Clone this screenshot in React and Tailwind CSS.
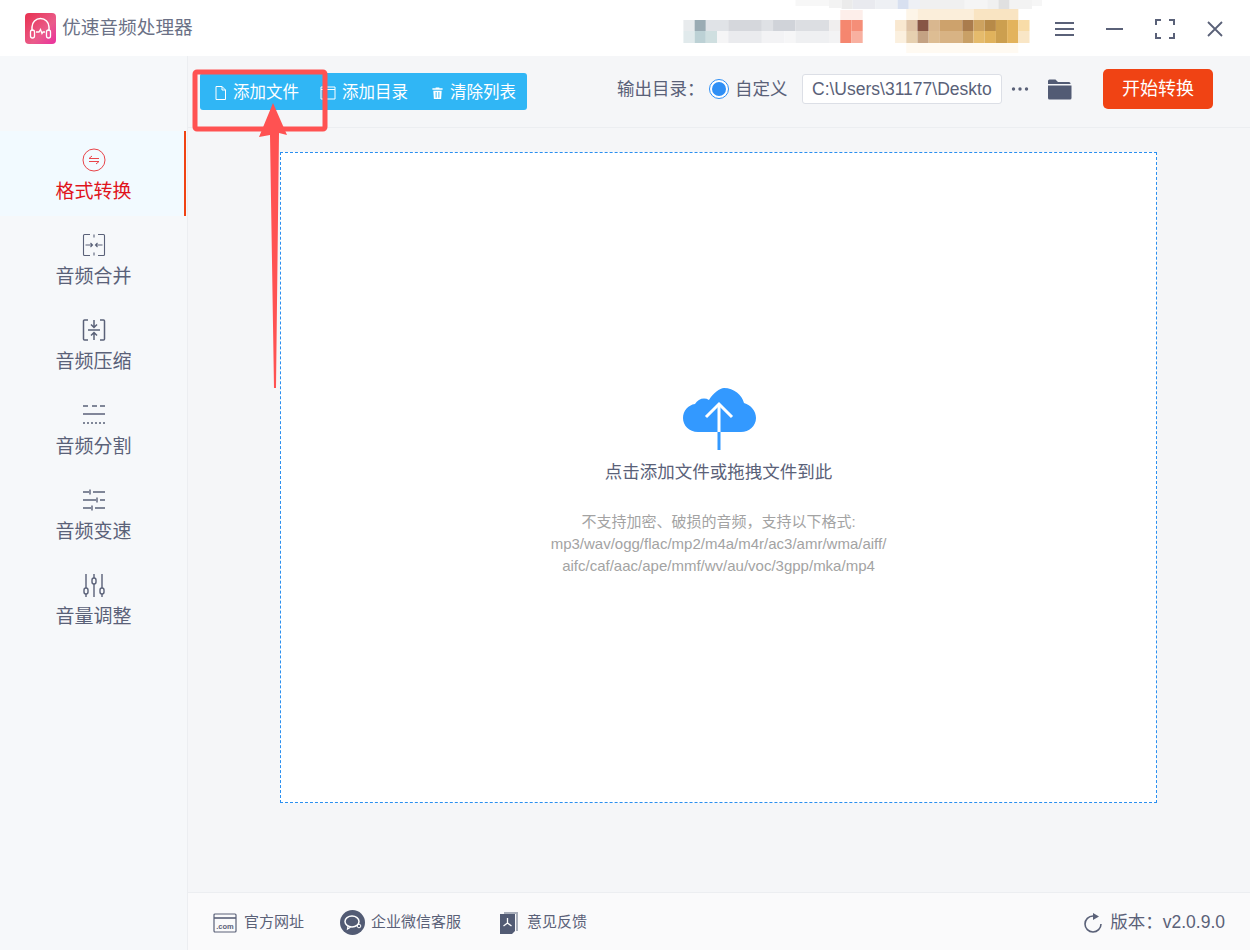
import React from "react";

const mosaic = [
  [667,20,9,11,"#e8ebed"],[676,20,9,11,"#9aabb3"],[685,20,18,11,"#e0e3e7"],[703,20,27,11,"#d5d7dc"],[730,20,9,11,"#dfe1e5"],[739,20,18,11,"#d0d3d9"],[757,20,27,11,"#dcdee2"],[784,20,9,11,"#f0eeee"],[793,20,9,11,"#f5876f"],[802,20,9,11,"#f58e78"],
  [667,31,9,12,"#e1eaec"],[676,31,9,12,"#bcd1d5"],[685,31,9,12,"#cfdfe0"],[694,31,9,12,"#f5f5f6"],[703,31,27,12,"#eaebee"],[730,31,18,12,"#f3f3f5"],[748,31,9,12,"#f6f6f7"],[757,31,27,12,"#eff0f2"],[784,31,9,12,"#f3f3f4"],[793,31,9,12,"#f5866f"],[802,31,9,12,"#f8b0a0"],
  [793,10,18,10,"#fdeeea"],
  [837,20,9,11,"#f9e8d0"],[846,20,9,11,"#dfc3a6"],[855,20,9,11,"#875545"],[864,20,9,11,"#d9b78f"],[873,20,18,11,"#cda26c"],[891,20,9,11,"#aa7c4d"],[900,20,9,11,"#cda25f"],[909,20,9,11,"#b78a48"],[918,20,9,11,"#cc9f4f"],[927,20,9,11,"#e3b35c"],[936,20,9,11,"#f8dca8"],
  [837,31,9,12,"#fbf0df"],[846,31,9,12,"#e6d0b0"],[855,31,9,12,"#c4a283"],[864,31,9,12,"#ddbd93"],[873,31,18,12,"#d8b384"],[891,31,9,12,"#c9a066"],[900,31,9,12,"#e5bb6c"],[909,31,9,12,"#e0b25c"],[918,31,9,12,"#cc9f4f"],[927,31,9,12,"#e3b35c"],[936,31,9,12,"#f9e6c6"],
  [846,9,9,11,"#fdf5e8"],[855,9,45,11,"#fbeeda"],[900,9,36,11,"#f9e4c2"],
  [846,43,90,10,"#fffaf2"],
  [757,0,27,6,"#f7f7f7"],[784,0,10,8,"#f3f3f3"],[794,0,9,9,"#ebebeb"],[803,0,18,9,"#e9eaef"],[821,0,18,9,"#eef0f4"],[839,0,9,9,"#d8e0f0"],[848,0,9,9,"#eef0f5"],[857,0,36,9,"#f0f0f0"],[893,0,18,9,"#f5f5f5"],[911,0,9,9,"#f0f0f0"],[920,0,9,9,"#e0e0e0"],[929,0,18,9,"#f3f3f3"],[947,0,8,6,"#f6f6f6"],
];

const SX = 1.245;
const stroke = "#5a6178";

function Mosaic() {
  return (
    <svg className="absolute left-0 top-0" width="1250" height="56" viewBox="0 0 1250 56">
      {mosaic.map(([x, y, w, h, c], i) => (
        <rect key={i} x={600 + (x - 600) * SX} y={y} width={w * SX} height={h} fill={c} />
      ))}
    </svg>
  );
}

function Logo() {
  return (
    <svg width="31" height="31" viewBox="0 0 31 31">
      <defs>
        <linearGradient id="lg" x1="0" y1="0" x2="1" y2="1">
          <stop offset="0" stopColor="#e8304f" />
          <stop offset="0.6" stopColor="#ea5c8a" />
          <stop offset="1" stopColor="#ea2f9f" />
        </linearGradient>
      </defs>
      <rect width="31" height="31" rx="4" fill="url(#lg)" />
      <path d="M7 18v-4a8.500 8.500 0 0 1 17 0v4" fill="none" stroke="#fff" strokeWidth="1.500" />
      <rect x="5.500" y="17" width="4" height="8" rx="2" fill="none" stroke="#fff" strokeWidth="1.300" />
      <rect x="21.500" y="17" width="4" height="8" rx="2" fill="none" stroke="#fff" strokeWidth="1.300" />
      <path d="M11 19h3l1.500-2.500 1.500 4 1-1.500h2" fill="none" stroke="#fff" strokeWidth="1.300" />
    </svg>
  );
}

const icons = {
  convert: (
    <svg width="24" height="24" viewBox="0 0 24 24" fill="none" stroke="#e8454a" strokeWidth="1">
      <circle cx="12" cy="12" r="11" />
      <path d="M7 10.500h10M7 10.500l3-2.500M17 13.500H7M17 13.500l-3 2.500" />
    </svg>
  ),
  merge: (
    <svg width="24" height="24" viewBox="0 0 24 24" fill="none" stroke={stroke} strokeWidth="1.100">
      <path d="M8 1.500H2.500a1 1 0 0 0-1 1v19a1 1 0 0 0 1 1H8M16 1.500h5.500a1 1 0 0 1 1 1v19a1 1 0 0 1-1 1H16M12 1.500v3M12 19.500v3" />
      <path d="M3.500 12h7M8.500 10l2 2-2 2M20.500 12h-7M15.500 10l-2 2 2 2" />
    </svg>
  ),
  compress: (
    <svg width="24" height="24" viewBox="0 0 24 24" fill="none" stroke={stroke} strokeWidth="1.500">
      <path d="M6 2H2.500a1 1 0 0 0-1 1v18a1 1 0 0 0 1 1H6M18 2h3.500a1 1 0 0 1 1 1v18a1 1 0 0 1-1 1H18" />
      <path d="M6 12h12M12 2v7M9 6.500l3 3 3-3M12 22v-7M9 17.500l3-3 3 3" />
    </svg>
  ),
  split: (
    <svg width="24" height="24" viewBox="0 0 24 24" fill="none" stroke={stroke}>
      <path d="M1 3h5M10 3h5M18 3h5" strokeWidth="1.500" />
      <path d="M1 11h22" strokeWidth="1.500" />
      <path d="M1 20h22" strokeWidth="1.500" strokeDasharray="2 2" />
    </svg>
  ),
  speed: (
    <svg width="24" height="24" viewBox="0 0 24 24" fill="none" stroke={stroke} strokeWidth="1.400">
      <path d="M1 4h6M11 4h12M8 1.500v5M1 12h13M18 12h5M15 9.500v5M1 20h8M13 20h10M10 17.500v5" />
    </svg>
  ),
  volume: (
    <svg width="24" height="24" viewBox="0 0 24 24" fill="none" stroke={stroke} strokeWidth="1.400">
      <path d="M4 1v14M4 21v3M12 1v4M12 11v13M20 1v14M20 21v3" />
      <rect x="2" y="15" width="4" height="6" rx="2" />
      <rect x="10" y="5" width="4" height="6" rx="2" />
      <rect x="18" y="15" width="4" height="6" rx="2" />
    </svg>
  ),
};

const navItems = [
  { key: "convert", label: "格式转换", active: true },
  { key: "merge", label: "音频合并" },
  { key: "compress", label: "音频压缩" },
  { key: "split", label: "音频分割" },
  { key: "speed", label: "音频变速" },
  { key: "volume", label: "音量调整" },
];

function NavItem({ item }) {
  return (
    <div
      className={
        item.active
          ? "flex h-[85px] flex-col items-center pt-[17px] pl-[3px] bg-[#f2faff] border-r-2 border-[#f04314] text-[#e0141c]"
          : "flex h-[85px] flex-col items-center pt-[17px] pl-[3px] border-r-2 border-transparent text-[#5a6178]"
      }
    >
      {icons[item.key]}
      <span className="mt-[6px] text-[19px] leading-[28px]">{item.label}</span>
    </div>
  );
}

function ToolButton({ icon, label, className }) {
  return (
    <div className={"flex items-center gap-[6px] text-[16.500px] text-white " + className}>
      {icon}
      <span>{label}</span>
    </div>
  );
}

export default function App() {
  return (
    <div className="relative flex h-[950px] w-[1250px] flex-col overflow-hidden bg-white font-['Liberation_Sans','Noto_Sans_CJK_SC',sans-serif]">
      {/* Title bar */}
      <header className="relative flex h-14 shrink-0 items-center bg-white pl-[25px] pr-[27px]">
        <Mosaic />
        <div className="relative flex items-center gap-[6px]">
          <Logo />
          <span className="text-[18.700px] text-[#6b7186]">优速音频处理器</span>
        </div>
        <div className="relative ml-auto flex items-center gap-[32px] pt-px">
          <svg width="19" height="16" viewBox="0 0 19 16" stroke={stroke} strokeWidth="2">
            <path d="M0 2h19M0 8h19M0 14h19" />
          </svg>
          <svg width="17" height="16" viewBox="0 0 17 16" stroke={stroke} strokeWidth="2">
            <path d="M0 8h17" />
          </svg>
          <svg width="20" height="20" viewBox="0 0 20 20" fill="none" stroke={stroke} strokeWidth="2">
            <path d="M1 6V1h5M14 1h5v5M19 14v5h-5M6 19H1v-5" />
          </svg>
          <svg width="16" height="16" viewBox="0 0 16 16" stroke={stroke} strokeWidth="1.800">
            <path d="M1 1l14 14M15 1L1 15" />
          </svg>
        </div>
      </header>

      <div className="flex min-h-0 flex-1">
        {/* Sidebar */}
        <aside className="w-[188px] shrink-0 border-r border-[#eceef1] bg-[#f6f8fa] pt-[75px] pr-px">
          {navItems.map((item) => (
            <NavItem key={item.key} item={item} />
          ))}
        </aside>

        <div className="flex min-w-0 flex-1 flex-col bg-[#f5f6f8]">
          {/* Toolbar */}
          <div className="flex h-[72px] shrink-0 items-center border-b border-[#eceef1] pb-[5px] pl-3 pr-[37px]">
            <div className="mt-[5px] flex h-[37px] w-[327px] items-center rounded-[3px] bg-[#30b6f5] pl-[14px] pt-[2px]">
              <ToolButton
                className="w-[106px]"
                label="添加文件"
                icon={
                  <svg width="13" height="14" viewBox="0 0 13 14" fill="none" stroke="#fff" strokeWidth="1">
                    <path d="M2 .500h6l3.500 3.500v9.500H2zM8 .500V4h3.500" />
                  </svg>
                }
              />
              <ToolButton
                className="w-[111px]"
                label="添加目录"
                icon={
                  <svg width="16" height="14" viewBox="0 0 16 14" fill="none" stroke="#fff" strokeWidth="1">
                    <path d="M1 1h14v12H1zM1 3.500h14" />
                  </svg>
                }
              />
              <ToolButton
                label="清除列表"
                icon={
                  <svg width="13" height="14" viewBox="0 0 14 14" fill="#fff">
                    <path d="M5 1h4v1h3.500v1.500h-11V2H5zM2.500 4.500h9l-.6 9H3.100zM5 6v6h1V6zm3 0v6h1V6z" />
                  </svg>
                }
              />
            </div>

            <span className="ml-[90px] w-[92px] whitespace-nowrap text-[17.500px] text-[#5a6178]">{"输出目录\uFF1A"}</span>
            <span className="flex h-5 w-5 items-center justify-center rounded-full border border-[#2f8ff5] bg-white">
              <span className="h-[14px] w-[14px] rounded-full bg-[#2f8ff5]" />
            </span>
            <span className="ml-[6px] w-[52px] whitespace-nowrap text-[17.500px] text-[#5a6178]">自定义</span>
            <div className="ml-[15px] flex h-[30px] w-[200px] shrink-0 items-center overflow-hidden whitespace-nowrap rounded-[3px] border border-[#dcdfe6] bg-white pl-[9px] text-[17.500px] text-[#5a6178]">
              C:\Users\31177\Deskto
            </div>
            <svg className="ml-[9px] shrink-0" width="18" height="6" viewBox="0 0 18 6" fill={stroke}>
              <circle cx="2.500" cy="3" r="1.700" />
              <circle cx="9" cy="3" r="1.700" />
              <circle cx="15.500" cy="3" r="1.700" />
            </svg>
            <svg className="ml-[18px] shrink-0" width="25" height="22" viewBox="0 0 25 22" fill="#525b74">
              <path d="M1 3a1.500 1.500 0 0 1 1.500-1.500h6L11 4h11a1.500 1.500 0 0 1 1.500 1.500V6H1z" />
              <path d="M1 7.500h23.500V20a1.500 1.500 0 0 1-1.500 1.500H2.500A1.500 1.500 0 0 1 1 20z" />
            </svg>
            <div className="ml-auto flex h-10 w-[110px] shrink-0 items-center justify-center rounded-[5px] bg-[#f04314] text-[18px] text-white">
              开始转换
            </div>
          </div>

          {/* Drop zone */}
          <main className="flex min-h-0 flex-1 flex-col pl-[92px] pr-[93px] pt-6">
            <div className="flex h-[651px] flex-col items-center border border-dashed border-[#2a8ff0] bg-white pt-[234px]">
              <svg width="74" height="64" viewBox="0 0 74 64">
                <path
                  d="M16 45C7 45 1 38.500 1 31c0-7 5-13 12-14 3-5 9-7 14-4C31 6 38 1 42 1c10 0 18 7 20 15 7 2 12 8 12 15 0 8-7 14-15 14z"
                  fill="#3399ff"
                />
                <path d="M37 45v18" stroke="#3399ff" strokeWidth="3" />
                <path d="M37 45V17" stroke="#fff" strokeWidth="3" />
                <path d="M24 30l13-13 13 13" fill="none" stroke="#fff" strokeWidth="3" />
              </svg>
              <p className="mt-[8px] text-[17.500px] leading-[26px] text-[#5a6178]">点击添加文件或拖拽文件到此</p>
              <div className="mt-[26px] text-center text-[15px] leading-[22px] text-[#a3a3a3]">
                <p>{"不支持加密、破损的音频\uFF0C支持以下格式:"}</p>
                <p>mp3/wav/ogg/flac/mp2/m4a/m4r/ac3/amr/wma/aiff/</p>
                <p>aifc/caf/aac/ape/mmf/wv/au/voc/3gpp/mka/mp4</p>
              </div>
            </div>
          </main>

          {/* Footer */}
          <footer className="flex h-[58px] shrink-0 items-center border-t border-[#eceef1] bg-[#fafafb] pl-[25px] pr-[25px] pt-[2px] text-[15px] text-[#5a6178]">
            <svg width="24" height="20" viewBox="0 0 24 20" fill="none" stroke={stroke} strokeWidth="1.200">
              <rect x="1" y="1" width="22" height="18" rx="1" />
              <path d="M1 5h22" strokeWidth="1.600" />
              <text x="12" y="15.500" textAnchor="middle" fontSize="7.500" fontWeight="700" fill={stroke} stroke="none" fontFamily="Liberation Sans">.com</text>
            </svg>
            <span className="ml-[7px]">官方网址</span>
            <svg className="ml-[36px]" width="25" height="25" viewBox="0 0 25 25">
              <circle cx="12.500" cy="12.500" r="12.500" fill="#525b74" />
              <ellipse cx="12" cy="11.500" rx="7" ry="5.500" fill="none" stroke="#fff" strokeWidth="1.500" />
              <path d="M8 16l-.5 3 3-1.800" fill="none" stroke="#fff" strokeWidth="1.200" />
              <circle cx="19" cy="16" r="1.800" fill="none" stroke="#fff" strokeWidth="1" />
            </svg>
            <span className="ml-[6px]">企业微信客服</span>
            <svg className="ml-[38px]" width="20" height="24" viewBox="0 0 20 24">
              <path d="M5 1h14v19h-2V3H5z" fill="#a9aeba" />
              <path d="M1 3h15v17l-3 3H1z" fill="#525b74" />
              <path d="M8.500 7v5M8.500 12l-4 3M8.500 12l4 3" fill="none" stroke="#fff" strokeWidth="1.300" />
            </svg>
            <span className="ml-[8px]">意见反馈</span>
            <svg className="ml-auto" width="20" height="20" viewBox="0 0 20 20" fill="none" stroke={stroke} strokeWidth="1.600">
              <path d="M10 3a8 8 0 1 0 8 8" />
              <path d="M10 0l6 3.500-6 3.500z" fill={stroke} stroke="none" />
            </svg>
            <span className="ml-[7px] text-[17.500px]">{"版本\uFF1Av2.0.9.0"}</span>
          </footer>
        </div>
      </div>

      {/* Annotation over the toolbar */}
      <svg className="pointer-events-none absolute left-0 top-0" width="1250" height="400" viewBox="0 0 1250 400">
        <rect x="195" y="72" width="130" height="57" rx="2" fill="none" stroke="#ff5252" strokeWidth="5" />
        <path d="M274 388L270 135L259 137L273 103L287 135L279 133L276 388z" fill="#ff5252" />
      </svg>
    </div>
  );
}
